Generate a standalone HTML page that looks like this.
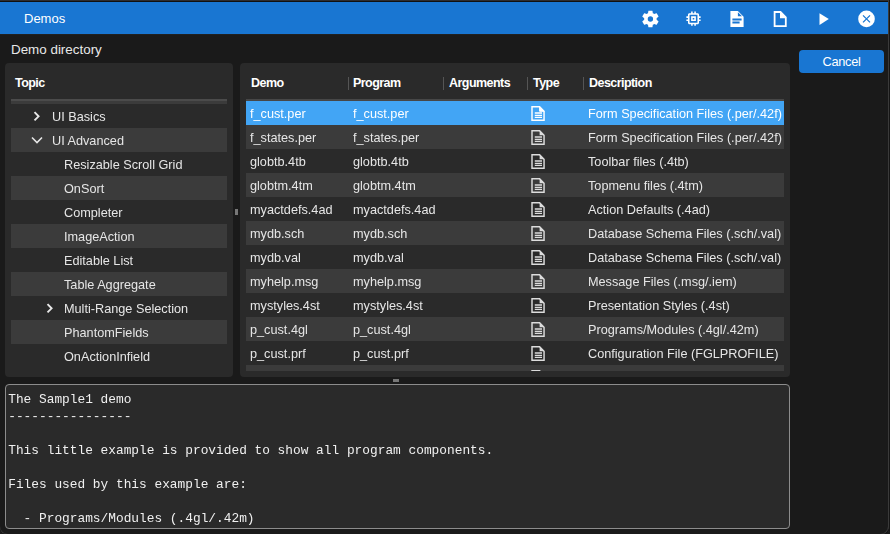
<!DOCTYPE html>
<html><head><meta charset="utf-8">
<style>
*{box-sizing:border-box;margin:0;padding:0}
html,body{width:890px;height:534px;overflow:hidden;background:#1a1a1a}
body{position:relative;font-family:"Liberation Sans",sans-serif;font-size:12.7px;color:#e6e6e6}
.abs{position:absolute}
#frame{position:absolute;left:0;top:0;width:890px;height:534px;background:#1a1a1a;border-radius:0 0 6px 6px;overflow:hidden}
#topline{left:0;top:0;width:888px;height:2px;background:#111;border-top:1px solid #2d2d30}
#title{left:0;top:2px;width:888px;height:32px;background:#1976d2}
#titleline{left:0;top:34px;width:888px;height:1px;background:#202020}
#rborder{left:888px;top:0;width:2px;height:534px;background:#1a1a1a;border-left:1px solid #3c3c3c}
#rcorner{left:870px;top:514px;width:30px;height:30px;border-right:1px solid #3c3c3c;border-bottom:1px solid #3c3c3c;border-radius:0 0 9px 0;background:transparent}
#lcorner{left:-12px;top:516px;width:30px;height:30px;border-left:1px solid #333;border-bottom:1px solid #333;border-radius:0 0 0 12px}
#title .t{position:absolute;left:24px;top:9px;color:#fff;font-size:13px}
.ic{position:absolute;fill:#fff}
#dirlabel{left:11px;top:41.5px;font-size:13.4px;color:#e8e8e8}
.panel{position:absolute;background:#2a2a2a;border-radius:4px}
#p1{left:5px;top:63px;width:228px;height:314px}
#p2{left:240px;top:63px;width:550px;height:314px}
.hdr{position:absolute;font-weight:bold;font-size:12.5px;letter-spacing:-0.55px;color:#fff;top:13px}
.hline{position:absolute;background:#474747}
.row{position:absolute;height:24px;line-height:24px;white-space:nowrap;will-change:transform}
.alt{background:#3b3b3b}
.sel{background:#42a5f5;color:#fff}
.chev{position:absolute;top:0}
#cancel{left:799px;top:50px;width:85px;height:23px;background:#1976d2;border-radius:4px;color:#fff;font-size:12.8px;letter-spacing:-0.3px;text-align:center;line-height:23px}
#ta{will-change:transform;left:5px;top:384px;width:785px;height:145px;background:#2a2a2a;border:1px solid #8c8c8c;border-radius:4px;overflow:hidden}
#ta pre{position:absolute;left:2.2px;top:5.8px;font-family:"Liberation Mono",monospace;font-size:12.83px;line-height:17px;color:#f0f0f0}
.sep{position:absolute;top:14px;width:1px;height:13px;background:#555}
.cell{position:absolute;top:1px}
.ticon{position:absolute;top:5px;left:285px}
.sel .ticon path{stroke:#fff}.sel .ticon path:nth-child(2){fill:#fff}
</style></head>
<body>
<div id="frame">
<div class="abs" id="topline"></div>
<div class="abs" id="title"><span class="t">Demos</span>
<svg class="ic" style="left:640px;top:7px" width="20" height="20" viewBox="-0.5 0 24 24"><path d="M19.43 12.98c.04-.32.07-.64.07-.98s-.03-.66-.07-.98l2.11-1.65c.19-.15.24-.42.12-.64l-2-3.46c-.12-.22-.39-.3-.61-.22l-2.49 1c-.52-.4-1.08-.73-1.690-.98l-.38-2.650C14.460 2.180 14.250 2 14 2h-4c-.25 0-.46.18-.49.42l-.38 2.65c-.61.25-1.17.59-1.69.98l-2.49-1c-.23-.09-.49 0-.61.22l-2 3.46c-.13.22-.07.49.12.64l2.11 1.65c-.04.32-.07.65-.07.98s.03.66.07.98l-2.11 1.65c-.19.15-.24.42-.12.64l2 3.46c.12.22.39.3.61.22l2.49-1c.52.4 1.08.73 1.69.98l.38 2.65c.03.24.24.42.49.42h4c.25 0 .46-.18.49-.42l.38-2.65c.61-.25 1.17-.59 1.69-.98l2.49 1c.23.09.49 0 .61-.22l2-3.46c.12-.22.07-.49-.12-.64l-2.11-1.65zM12 15.2a3.2 3.2 0 1 1 0-6.4a3.2 3.2 0 1 1 0 6.4z" fill-rule="evenodd"/></svg>
<svg class="ic" style="left:684px;top:7px" width="19" height="19" viewBox="0 -0.3 24 24"><path d="M15 9H9v6h6V9zm-2 4h-2v-2h2v2zm8-2V9h-2V7c0-1.1-.9-2-2-2h-2V3h-2v2h-2V3H9v2H7c-1.1 0-2 .9-2 2v2H3v2h2v2H3v2h2v2c0 1.1.9 2 2 2h2v2h2v-2h2v2h2v-2h2c1.1 0 2-.9 2-2v-2h2v-2h-2v-2h2zm-4 6H7V7h10v10z"/></svg>
<svg class="ic" style="left:722px;top:2px" width="70" height="30" viewBox="722 4 70 30"><path fill-rule="evenodd" d="M730.4 11H737.9L743.6 16.7V27H730.4ZM737.9 12.3V16.3H742ZM732.4 18.5H741.6V20.5H732.4ZM732.4 21.6H739.6V23.6H732.4Z"/><path fill-rule="evenodd" d="M773.7 11.1H780.9L786.7 16.9V27H773.7ZM775.5 25.2V12.9H780V18.3H784.9V25.2Z"/></svg>
<svg class="ic" style="left:810px;top:2px" width="70" height="30" viewBox="810 4 70 30"><path d="M819.5 13.2V25L828.8 19.1Z"/><circle cx="866.5" cy="18.9" r="8.3"/><path d="M863 15.4L870 22.4M870 15.4L863 22.4" stroke="#1976d2" stroke-width="1.25"/></svg>
</div>
<div class="abs" id="titleline"></div>
<div class="abs" id="rborder"></div>
<div class="abs" style="left:-1px;top:-20px;width:890px;height:555px;border:1px solid #3a3a3a;border-radius:0 0 9px 9px;box-shadow:0 0 0 4px #161616"></div>

<div class="abs" id="dirlabel">Demo directory</div>

<div class="panel" id="p1">
<div class="hdr" style="left:10px">Topic</div>
<div class="hline" style="left:6px;top:36px;width:216px;height:2px;background:#4b4b4b"></div><div class="hline" style="left:6px;top:38px;width:216px;height:3px;background:#3b3b3b"></div>
<div class="row" style="left:6px;top:41px;width:216px"><svg class="chev" style="left:20px" width="12" height="24" viewBox="0 0 12 24"><path d="M3.5 8.2L7.6 12.3L3.5 16.4" stroke="#e8e8e8" stroke-width="1.9" fill="none"/></svg><span class="cell" style="left:41px">UI Basics</span></div>
<div class="row alt" style="left:6px;top:65px;width:216px"><svg class="chev" style="left:20px" width="12" height="24" viewBox="0 0 12 24"><path d="M1 9.5l5 5 5-5" stroke="#e6e6e6" stroke-width="1.6" fill="none"/></svg><span class="cell" style="left:41px">UI Advanced</span></div>
<div class="row" style="left:6px;top:89px;width:216px"><span class="cell" style="left:53px">Resizable Scroll Grid</span></div>
<div class="row alt" style="left:6px;top:113px;width:216px"><span class="cell" style="left:53px">OnSort</span></div>
<div class="row" style="left:6px;top:137px;width:216px"><span class="cell" style="left:53px">Completer</span></div>
<div class="row alt" style="left:6px;top:161px;width:216px"><span class="cell" style="left:53px">ImageAction</span></div>
<div class="row" style="left:6px;top:185px;width:216px"><span class="cell" style="left:53px">Editable List</span></div>
<div class="row alt" style="left:6px;top:209px;width:216px"><span class="cell" style="left:53px">Table Aggregate</span></div>
<div class="row" style="left:6px;top:233px;width:216px"><svg class="chev" style="left:33px" width="12" height="24" viewBox="0 0 12 24"><path d="M3.5 8.2L7.6 12.3L3.5 16.4" stroke="#e8e8e8" stroke-width="1.9" fill="none"/></svg><span class="cell" style="left:53px">Multi-Range Selection</span></div>
<div class="row alt" style="left:6px;top:257px;width:216px"><span class="cell" style="left:53px">PhantomFields</span></div>
<div class="row" style="left:6px;top:281px;width:216px"><span class="cell" style="left:53px">OnActionInfield</span></div>
</div>

<div class="abs" style="left:235px;top:209px;width:3px;height:6px;background:#777"></div>

<div class="panel" id="p2">
<div class="hdr" style="left:11px">Demo</div>
<div class="sep" style="left:108px"></div>
<div class="hdr" style="left:113px">Program</div>
<div class="sep" style="left:203px"></div>
<div class="hdr" style="left:209px">Arguments</div>
<div class="sep" style="left:287px"></div>
<div class="hdr" style="left:293px">Type</div>
<div class="sep" style="left:343px"></div>
<div class="hdr" style="left:349px">Description</div>
<div class="hline" style="left:6px;top:36px;width:538px;height:2px"></div>
<div id="rows" style="position:absolute;left:6px;top:38px;width:538px;height:270px;overflow:hidden">
<div class="row sel" style="left:0;top:0px;width:538px"><span class="cell" style="left:4px">f_cust.per</span><span class="cell" style="left:107px">f_cust.per</span><svg class="ticon" width="14" height="16" viewBox="0 0 14 16"><path d="M1 0.75H8.6L13.05 5.2V14.15H1Z" stroke="#dcdcdc" stroke-width="1.45" fill="none"/><path d="M8.6 0.8V5.3H13.1Z" fill="#dcdcdc"/><path d="M3.8 7H11M3.8 9.3H11M3.8 11.3H11" stroke="#dcdcdc" stroke-width="1.3"/></svg><span class="cell" style="left:342px">Form Specification Files (.per/.42f)</span></div>
<div class="row alt" style="left:0;top:24px;width:538px"><span class="cell" style="left:4px">f_states.per</span><span class="cell" style="left:107px">f_states.per</span><svg class="ticon" width="14" height="16" viewBox="0 0 14 16"><path d="M1 0.75H8.6L13.05 5.2V14.15H1Z" stroke="#dcdcdc" stroke-width="1.45" fill="none"/><path d="M8.6 0.8V5.3H13.1Z" fill="#dcdcdc"/><path d="M3.8 7H11M3.8 9.3H11M3.8 11.3H11" stroke="#dcdcdc" stroke-width="1.3"/></svg><span class="cell" style="left:342px">Form Specification Files (.per/.42f)</span></div>
<div class="row " style="left:0;top:48px;width:538px"><span class="cell" style="left:4px">globtb.4tb</span><span class="cell" style="left:107px">globtb.4tb</span><svg class="ticon" width="14" height="16" viewBox="0 0 14 16"><path d="M1 0.75H8.6L13.05 5.2V14.15H1Z" stroke="#dcdcdc" stroke-width="1.45" fill="none"/><path d="M8.6 0.8V5.3H13.1Z" fill="#dcdcdc"/><path d="M3.8 7H11M3.8 9.3H11M3.8 11.3H11" stroke="#dcdcdc" stroke-width="1.3"/></svg><span class="cell" style="left:342px">Toolbar files (.4tb)</span></div>
<div class="row alt" style="left:0;top:72px;width:538px"><span class="cell" style="left:4px">globtm.4tm</span><span class="cell" style="left:107px">globtm.4tm</span><svg class="ticon" width="14" height="16" viewBox="0 0 14 16"><path d="M1 0.75H8.6L13.05 5.2V14.15H1Z" stroke="#dcdcdc" stroke-width="1.45" fill="none"/><path d="M8.6 0.8V5.3H13.1Z" fill="#dcdcdc"/><path d="M3.8 7H11M3.8 9.3H11M3.8 11.3H11" stroke="#dcdcdc" stroke-width="1.3"/></svg><span class="cell" style="left:342px">Topmenu files (.4tm)</span></div>
<div class="row " style="left:0;top:96px;width:538px"><span class="cell" style="left:4px">myactdefs.4ad</span><span class="cell" style="left:107px">myactdefs.4ad</span><svg class="ticon" width="14" height="16" viewBox="0 0 14 16"><path d="M1 0.75H8.6L13.05 5.2V14.15H1Z" stroke="#dcdcdc" stroke-width="1.45" fill="none"/><path d="M8.6 0.8V5.3H13.1Z" fill="#dcdcdc"/><path d="M3.8 7H11M3.8 9.3H11M3.8 11.3H11" stroke="#dcdcdc" stroke-width="1.3"/></svg><span class="cell" style="left:342px">Action Defaults (.4ad)</span></div>
<div class="row alt" style="left:0;top:120px;width:538px"><span class="cell" style="left:4px">mydb.sch</span><span class="cell" style="left:107px">mydb.sch</span><svg class="ticon" width="14" height="16" viewBox="0 0 14 16"><path d="M1 0.75H8.6L13.05 5.2V14.15H1Z" stroke="#dcdcdc" stroke-width="1.45" fill="none"/><path d="M8.6 0.8V5.3H13.1Z" fill="#dcdcdc"/><path d="M3.8 7H11M3.8 9.3H11M3.8 11.3H11" stroke="#dcdcdc" stroke-width="1.3"/></svg><span class="cell" style="left:342px">Database Schema Files (.sch/.val)</span></div>
<div class="row " style="left:0;top:144px;width:538px"><span class="cell" style="left:4px">mydb.val</span><span class="cell" style="left:107px">mydb.val</span><svg class="ticon" width="14" height="16" viewBox="0 0 14 16"><path d="M1 0.75H8.6L13.05 5.2V14.15H1Z" stroke="#dcdcdc" stroke-width="1.45" fill="none"/><path d="M8.6 0.8V5.3H13.1Z" fill="#dcdcdc"/><path d="M3.8 7H11M3.8 9.3H11M3.8 11.3H11" stroke="#dcdcdc" stroke-width="1.3"/></svg><span class="cell" style="left:342px">Database Schema Files (.sch/.val)</span></div>
<div class="row alt" style="left:0;top:168px;width:538px"><span class="cell" style="left:4px">myhelp.msg</span><span class="cell" style="left:107px">myhelp.msg</span><svg class="ticon" width="14" height="16" viewBox="0 0 14 16"><path d="M1 0.75H8.6L13.05 5.2V14.15H1Z" stroke="#dcdcdc" stroke-width="1.45" fill="none"/><path d="M8.6 0.8V5.3H13.1Z" fill="#dcdcdc"/><path d="M3.8 7H11M3.8 9.3H11M3.8 11.3H11" stroke="#dcdcdc" stroke-width="1.3"/></svg><span class="cell" style="left:342px">Message Files (.msg/.iem)</span></div>
<div class="row " style="left:0;top:192px;width:538px"><span class="cell" style="left:4px">mystyles.4st</span><span class="cell" style="left:107px">mystyles.4st</span><svg class="ticon" width="14" height="16" viewBox="0 0 14 16"><path d="M1 0.75H8.6L13.05 5.2V14.15H1Z" stroke="#dcdcdc" stroke-width="1.45" fill="none"/><path d="M8.6 0.8V5.3H13.1Z" fill="#dcdcdc"/><path d="M3.8 7H11M3.8 9.3H11M3.8 11.3H11" stroke="#dcdcdc" stroke-width="1.3"/></svg><span class="cell" style="left:342px">Presentation Styles (.4st)</span></div>
<div class="row alt" style="left:0;top:216px;width:538px"><span class="cell" style="left:4px">p_cust.4gl</span><span class="cell" style="left:107px">p_cust.4gl</span><svg class="ticon" width="14" height="16" viewBox="0 0 14 16"><path d="M1 0.75H8.6L13.05 5.2V14.15H1Z" stroke="#dcdcdc" stroke-width="1.45" fill="none"/><path d="M8.6 0.8V5.3H13.1Z" fill="#dcdcdc"/><path d="M3.8 7H11M3.8 9.3H11M3.8 11.3H11" stroke="#dcdcdc" stroke-width="1.3"/></svg><span class="cell" style="left:342px">Programs/Modules (.4gl/.42m)</span></div>
<div class="row " style="left:0;top:240px;width:538px"><span class="cell" style="left:4px">p_cust.prf</span><span class="cell" style="left:107px">p_cust.prf</span><svg class="ticon" width="14" height="16" viewBox="0 0 14 16"><path d="M1 0.75H8.6L13.05 5.2V14.15H1Z" stroke="#dcdcdc" stroke-width="1.45" fill="none"/><path d="M8.6 0.8V5.3H13.1Z" fill="#dcdcdc"/><path d="M3.8 7H11M3.8 9.3H11M3.8 11.3H11" stroke="#dcdcdc" stroke-width="1.3"/></svg><span class="cell" style="left:342px">Configuration File (FGLPROFILE)</span></div>
<div class="row alt" style="left:0;top:264px;width:538px"><span class="cell" style="left:4px"></span><span class="cell" style="left:107px"></span><svg class="ticon" width="14" height="16" viewBox="0 0 14 16"><path d="M1 0.75H8.6L13.05 5.2V14.15H1Z" stroke="#dcdcdc" stroke-width="1.45" fill="none"/><path d="M8.6 0.8V5.3H13.1Z" fill="#dcdcdc"/><path d="M3.8 7H11M3.8 9.3H11M3.8 11.3H11" stroke="#dcdcdc" stroke-width="1.3"/></svg><span class="cell" style="left:342px"></span></div>
</div>
</div>

<div class="abs" style="left:393px;top:379px;width:6px;height:3px;background:#777"></div>

<div class="abs" id="cancel">Cancel</div>

<div class="abs" id="ta"><pre>The Sample1 demo
----------------

This little example is provided to show all program components.

Files used by this example are:

  - Programs/Modules (.4gl/.42m)</pre></div>
</div>
</body></html>
